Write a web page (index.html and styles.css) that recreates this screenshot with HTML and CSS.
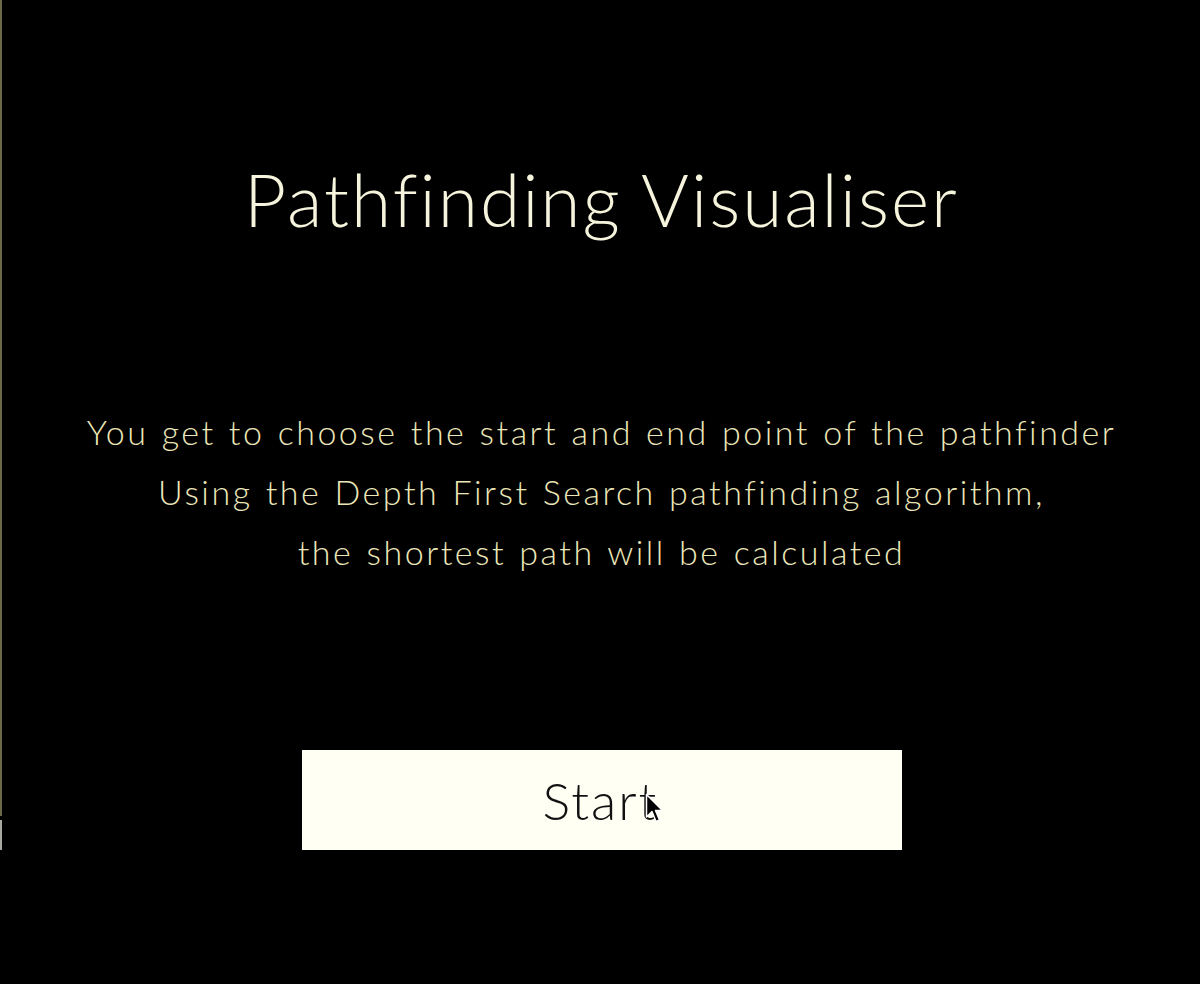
FILE: index.html
```html
<!DOCTYPE html>
<html lang="en">
<head>
<meta charset="utf-8">
<title>Pathfinding Visualiser</title>
<link rel="stylesheet" href="styles.css">
</head>
<body>
<div class="page">
  <div class="edge"><span class="edge-top"></span><span class="edge-gap"></span><span class="edge-piece"></span></div>
  <main class="main">
    <h1 class="title">Pathfinding Visualiser</h1>
    <div class="intro">
      <p>You get to choose the start and end point of the pathfinder</p>
      <p>Using the Depth First Search pathfinding algorithm,</p>
      <p>the shortest path will be calculated</p>
    </div>
    <button class="start">
      <span class="start-label">Start</span>
      <svg class="cursor" width="20" height="32" viewBox="0 0 20 32" aria-hidden="true">
        <path d="M1.5 1.5 L1.5 24 L7 18.5 L11 28.5 L14.5 27 L10.5 17.5 L17.5 17.5 Z" fill="#000" stroke="#fff" stroke-width="1.5" stroke-linejoin="round"/>
      </svg>
    </button>
  </main>
</div>
</body>
</html>
```

FILE: styles.css
```css
html, body {
  margin: 0;
  padding: 0;
  background: #000;
}
body {
  width: 1200px;
  height: 984px;
  overflow: hidden;
  font-family: "Lato", "Noto Sans", sans-serif;
}
.page {
  display: flex;
  height: 984px;
}
.edge {
  width: 2px;
  display: flex;
  flex-direction: column;
  flex: none;
}
.edge-top {
  height: 816px;
  background: #6a6948;
}
.edge-gap {
  height: 4px;
}
.edge-piece {
  height: 30px;
  background: #a9a8a0;
}
.main {
  flex: 1;
  display: flex;
  flex-direction: column;
  align-items: center;
  padding-left: 1px;
}
.title {
  margin: 149px 0 0;
  font-weight: 300;
  font-size: 73px;
  line-height: 100px;
  color: #f6f4dc;
  letter-spacing: 2px;
}
.intro {
  margin-top: 153px;
  text-align: center;
  color: #ece7b8;
  font-weight: 300;
  font-size: 34px;
  line-height: 60px;
  letter-spacing: 2.5px;
  word-spacing: 1.5px;
}
.intro p {
  margin: 0;
}
.start {
  margin-top: 168px;
  width: 600px;
  height: 100px;
  background: #fffff4;
  border: none;
  padding: 0;
  position: relative;
  display: flex;
  align-items: center;
  justify-content: center;
  font-family: "Lato", "Noto Sans", sans-serif;
  font-weight: 300;
  font-size: 52px;
  color: #111;
  letter-spacing: 2px;
  cursor: pointer;
}
.start-label {
  line-height: 1;
  padding-right: 2px;
}
.cursor {
  position: absolute;
  left: 343px;
  top: 43px;
}
```
